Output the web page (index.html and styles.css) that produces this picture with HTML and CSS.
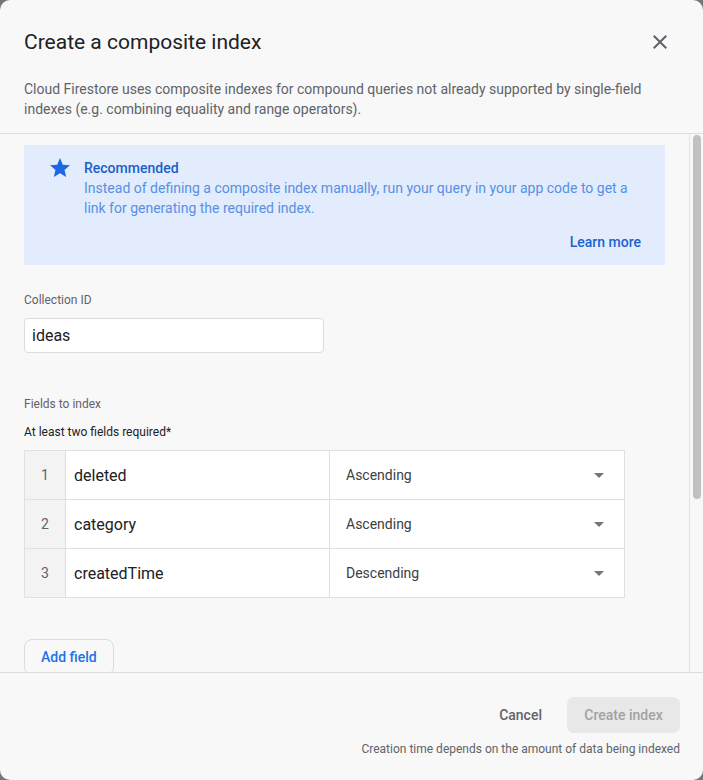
FILE: index.html
```html
<!DOCTYPE html>
<html lang="en">
<head>
<meta charset="utf-8">
<title>Create a composite index</title>
<link rel="stylesheet" href="styles.css">
</head>
<body>
<div class="dialog">
  <header class="dlg-header">
    <div class="title-row">
      <h1 class="title">Create a composite index</h1>
      <button class="close" aria-label="Close">
        <svg viewBox="0 0 24 24" width="24" height="24"><path d="M19 6.41L17.59 5 12 10.59 6.41 5 5 6.41 10.59 12 5 17.59 6.41 19 12 13.41 17.59 19 19 17.59 13.41 12z"/></svg>
      </button>
    </div>
    <p class="desc">Cloud Firestore uses composite indexes for compound queries not already supported by single-field indexes (e.g. combining equality and range operators).</p>
  </header>

  <div class="scroll">
    <div class="content">
      <div class="notice">
        <div class="notice-main">
          <svg class="star" viewBox="0 0 24 24" width="24" height="24"><path d="M12 17.27L18.18 21l-1.64-7.03L22 9.24l-7.19-.61L12 2 9.19 8.63 2 9.24l5.46 4.73L5.82 21z"/></svg>
          <div class="notice-text">
            <div class="notice-title">Recommended</div>
            <div class="notice-body">Instead of defining a composite index manually, run your query in your app code to get a link for generating the required index.</div>
          </div>
        </div>
        <div class="notice-actions"><a class="learn" href="#">Learn more</a></div>
      </div>

      <div class="label label-collection">Collection ID</div>
      <div class="input">ideas</div>

      <div class="label label-fields">Fields to index</div>
      <div class="hint">At least two fields required*</div>

      <div class="fields">
        <div class="frow">
          <div class="num">1</div>
          <div class="fname">deleted</div>
          <div class="fsel"><span>Ascending</span><span class="caret"></span></div>
        </div>
        <div class="frow">
          <div class="num">2</div>
          <div class="fname">category</div>
          <div class="fsel"><span>Ascending</span><span class="caret"></span></div>
        </div>
        <div class="frow">
          <div class="num">3</div>
          <div class="fname">createdTime</div>
          <div class="fsel"><span>Descending</span><span class="caret"></span></div>
        </div>
      </div>

      <button class="add">Add field</button>
    </div>
    <div class="rail"><div class="thumb"></div></div>
  </div>

  <footer class="dlg-footer">
    <div class="actions">
      <button class="cancel">Cancel</button>
      <button class="create" disabled>Create index</button>
    </div>
    <div class="caption">Creation time depends on the amount of data being indexed</div>
  </footer>
</div>
</body>
</html>
```

FILE: styles.css
```css
* { box-sizing: border-box; }

html, body {
  margin: 0;
  padding: 0;
  background: #777777;
  font-family: Roboto, "Noto Sans", Arial, sans-serif;
}

.dialog {
  width: 703px;
  height: 780px;
  background: #f8f8f8;
  border-radius: 10px;
  display: flex;
  flex-direction: column;
  overflow: hidden;
}

.dlg-header {
  padding: 26px 24px 14px 24px;
  border-bottom: 1px solid #dcdcdc;
}

.title-row {
  display: flex;
  align-items: center;
  justify-content: space-between;
}

.title {
  margin: 0;
  font-size: 21px;
  line-height: 32px;
  font-weight: 400;
  color: #202124;
}

.close {
  width: 24px;
  height: 24px;
  padding: 0;
  margin-right: 7px;
  border: 0;
  background: transparent;
  fill: #5f6368;
  display: flex;
}

.desc {
  margin: 21px 0 0 0;
  font-size: 14px;
  line-height: 20px;
  color: #5f6368;
}

.scroll {
  flex: 1;
  min-height: 0;
  display: flex;
  overflow: hidden;
}

.content {
  flex: 1;
  min-width: 0;
  padding: 11px 24px 0 24px;
}

.rail {
  flex: none;
  width: 14px;
  border-left: 1px solid #e3e3e3;
  padding: 1px 2px 0 3px;
}

.thumb {
  height: 364px;
  border-radius: 4px;
  background: #c1c1c1;
}

.notice {
  background: #e2ecfd;
  padding: 13px 24px 13px 24px;
}

.notice-main {
  display: flex;
  gap: 12px;
}

.star {
  fill: #1a6ae8;
  flex: none;
  margin-top: -2px;
}

.notice-title {
  font-size: 14px;
  line-height: 20px;
  font-weight: 500;
  color: #1a5fc8;
}

.notice-body {
  font-size: 14px;
  line-height: 20px;
  color: #5890e4;
}

.notice-actions {
  display: flex;
  justify-content: flex-end;
  margin-top: 14px;
}

.learn {
  font-size: 14px;
  line-height: 20px;
  font-weight: 500;
  color: #1a62d2;
  text-decoration: none;
}

.label {
  font-size: 12px;
  line-height: 16px;
  color: #5f6368;
}

.label-collection {
  margin-top: 27px;
}

.input {
  margin-top: 10px;
  width: 300px;
  height: 35px;
  background: #ffffff;
  border: 1px solid #dadce0;
  border-radius: 4px;
  padding: 0 7px;
  font-size: 16px;
  line-height: 33px;
  color: #202124;
}

.label-fields {
  margin-top: 43px;
}

.hint {
  margin-top: 12px;
  font-size: 12px;
  line-height: 16px;
  color: #202124;
}

.fields {
  margin-top: 10px;
  width: 601px;
  border: 1px solid #e0e0e0;
  background: #ffffff;
}

.frow {
  display: grid;
  grid-template-columns: 41px 264px 1fr;
  height: 49px;
  border-top: 1px solid #e0e0e0;
}

.frow:first-child {
  height: 48px;
  border-top: 0;
}

.num {
  background: #f3f3f3;
  border-right: 1px solid #e0e0e0;
  display: flex;
  align-items: center;
  justify-content: center;
  font-size: 14px;
  color: #5f6368;
}

.fname {
  border-right: 1px solid #e0e0e0;
  display: flex;
  align-items: center;
  padding-left: 8px;
  font-size: 16px;
  color: #202124;
}

.fsel {
  display: flex;
  align-items: center;
  justify-content: space-between;
  padding: 0 20px 0 16px;
  font-size: 14px;
  color: #3c4043;
}

.caret {
  width: 0;
  height: 0;
  border-left: 5px solid transparent;
  border-right: 5px solid transparent;
  border-top: 5px solid #757575;
}

.add {
  margin-top: 41px;
  height: 36px;
  padding: 0 16px;
  border: 1px solid #dadce0;
  border-radius: 8px;
  background: #f8f8f8;
  font-family: Roboto, "Noto Sans", Arial, sans-serif;
  font-size: 14px;
  font-weight: 500;
  color: #1a73e8;
}

.dlg-footer {
  border-top: 1px solid #dcdcdc;
  padding: 24px 23px 0 24px;
  height: 108px;
}

.actions {
  display: flex;
  justify-content: flex-end;
  gap: 9px;
}

.actions button {
  height: 36px;
  padding: 0 16px;
  border: 0;
  border-radius: 7px;
  font-family: Roboto, "Noto Sans", Arial, sans-serif;
  font-size: 14px;
  font-weight: 500;
}

.cancel {
  background: transparent;
  color: #5f6368;
}

.create {
  background: #e8e8e8;
  color: #a2a2a2;
  min-width: 113px;
}

.caption {
  margin-top: 8px;
  text-align: right;
  font-size: 12px;
  line-height: 16px;
  color: #5f6368;
}
```
